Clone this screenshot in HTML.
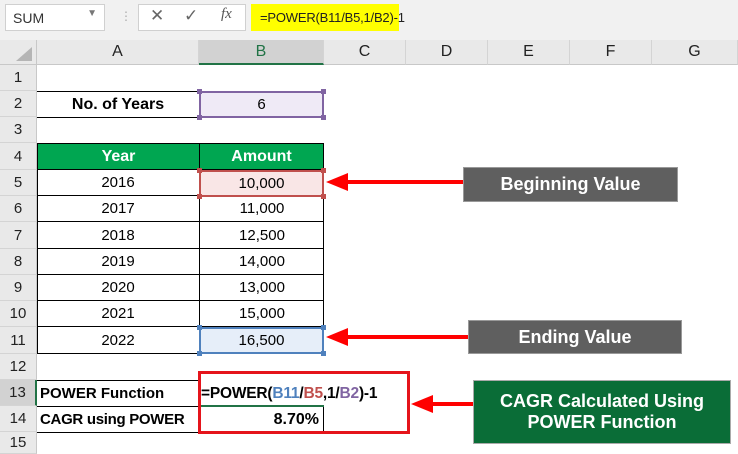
<!DOCTYPE html>
<html><head><style>
*{margin:0;padding:0;box-sizing:border-box}
body{width:738px;height:454px;position:relative;background:#fff;font-family:"Liberation Sans",sans-serif;overflow:hidden}
.a{position:absolute}
.c{position:absolute;display:flex;align-items:center;justify-content:center;font-size:15px;color:#000}
.rh{position:absolute;left:0;width:37px;background:#e9e9e9;border-bottom:1px solid #d4d4d4;border-right:1px solid #c8c8c8;display:flex;align-items:center;justify-content:center;font-size:15px;color:#222}
.ch{position:absolute;top:40px;height:25px;background:#e9e9e9;border-right:1px solid #d4d4d4;border-bottom:1px solid #c8c8c8;display:flex;align-items:center;justify-content:center;font-size:16px;color:#222}
.bx{position:absolute;display:flex;align-items:center;justify-content:center;color:#fff;font-weight:bold;font-size:18px;text-align:center;line-height:21px}
</style></head><body>
<div class="a" style="left:0;top:0;width:738px;height:40px;background:#f1f1f1"></div>
<div class="a" style="left:5px;top:4px;width:100px;height:27px;background:#fff;border:1px solid #d0d0d0;font-size:14px;padding:5px 0 0 7px;color:#333">SUM<span style="position:absolute;right:7px;top:3px;font-size:10px;color:#777">▼</span></div>
<div class="a" style="left:120px;top:9px;color:#aaa;font-size:12px">⋮</div>
<div class="a" style="left:138px;top:4px;width:108px;height:27px;background:#fff;border:1px solid #d0d0d0"></div>
<div class="a" style="left:150px;top:6px;color:#666;font-size:17px">✕</div>
<div class="a" style="left:184px;top:6px;color:#666;font-size:17px">✓</div>
<div class="a" style="left:221px;top:6px;color:#555;font-size:15px;font-family:'Liberation Serif',serif;font-style:italic">fx</div>
<div class="a" style="left:251px;top:4px;width:148px;height:27px;background:#ffff00;font-size:13px;padding:6px 0 0 9px;color:#222;white-space:nowrap;letter-spacing:-0.2px">=POWER(B11/B5,1/B2)-1</div>
<div class="a" style="left:0;top:40px;width:37px;height:25px;background:#e9e9e9;border-right:1px solid #c8c8c8;border-bottom:1px solid #c8c8c8"></div>
<div class="a" style="left:16px;top:47px;width:0;height:0;border-left:16px solid transparent;border-bottom:14px solid #b5b5b5"></div>
<div class="ch" style="left:37px;width:162px">A</div>
<div class="ch" style="left:199px;width:125px;background:#d2d2d2;border-bottom:2px solid #217346;color:#217346">B</div>
<div class="ch" style="left:324px;width:82px">C</div>
<div class="ch" style="left:406px;width:82px">D</div>
<div class="ch" style="left:488px;width:82px">E</div>
<div class="ch" style="left:570px;width:82px">F</div>
<div class="ch" style="left:652px;width:86px">G</div>
<div class="rh" style="top:65px;height:26px">1</div>
<div class="rh" style="top:91px;height:26px">2</div>
<div class="rh" style="top:117px;height:26px">3</div>
<div class="rh" style="top:143px;height:27px">4</div>
<div class="rh" style="top:170px;height:26px">5</div>
<div class="rh" style="top:196px;height:26px">6</div>
<div class="rh" style="top:222px;height:27px">7</div>
<div class="rh" style="top:249px;height:26px">8</div>
<div class="rh" style="top:275px;height:26px">9</div>
<div class="rh" style="top:301px;height:26px">10</div>
<div class="rh" style="top:327px;height:27px">11</div>
<div class="rh" style="top:354px;height:26px">12</div>
<div class="rh" style="top:380px;height:26px;background:#d2d2d2;border-right:2px solid #217346">13</div>
<div class="rh" style="top:406px;height:26px">14</div>
<div class="rh" style="top:432px;height:22px">15</div>
<div class="c" style="left:37px;top:91px;width:162px;height:27px;border-top:1px solid #000;border-bottom:1px solid #000;font-weight:bold;font-size:16px">No. of Years</div>
<div class="c" style="left:199px;top:91px;width:125px;height:27px;background:#efeaf6;border:2px solid #8064a2">6</div>
<div class="c" style="left:37px;top:143px;width:162px;height:27px;background:#00a651;color:#fff;font-weight:bold;font-size:16px;border:1px solid #000;border-right:none">Year</div>
<div class="c" style="left:199px;top:143px;width:125px;height:27px;background:#00a651;color:#fff;font-weight:bold;font-size:16px;border:1px solid #000">Amount</div>
<div class="a" style="left:37px;top:170px;width:287px;height:184px;border-left:1px solid #000;border-right:1px solid #000"></div>
<div class="a" style="left:199px;top:170px;width:1px;height:184px;background:#000"></div>
<div class="c" style="left:37px;top:170px;width:162px;height:26px;border-bottom:1px solid #000">2016</div>
<div class="c" style="left:37px;top:196px;width:162px;height:26px;border-bottom:1px solid #000">2017</div>
<div class="c" style="left:37px;top:222px;width:162px;height:27px;border-bottom:1px solid #000">2018</div>
<div class="c" style="left:37px;top:249px;width:162px;height:26px;border-bottom:1px solid #000">2019</div>
<div class="c" style="left:37px;top:275px;width:162px;height:26px;border-bottom:1px solid #000">2020</div>
<div class="c" style="left:37px;top:301px;width:162px;height:26px;border-bottom:1px solid #000">2021</div>
<div class="c" style="left:37px;top:327px;width:162px;height:27px;border-bottom:1px solid #000">2022</div>
<div class="c" style="left:199px;top:170px;width:125px;height:27px;background:#f9e6e6;border:2px solid #c0504d">10,000</div>
<div class="c" style="left:200px;top:196px;width:124px;height:26px;border-bottom:1px solid #000">11,000</div>
<div class="c" style="left:200px;top:222px;width:124px;height:27px;border-bottom:1px solid #000">12,500</div>
<div class="c" style="left:200px;top:249px;width:124px;height:26px;border-bottom:1px solid #000">14,000</div>
<div class="c" style="left:200px;top:275px;width:124px;height:26px;border-bottom:1px solid #000">13,000</div>
<div class="c" style="left:200px;top:301px;width:124px;height:26px;border-bottom:1px solid #000">15,000</div>
<div class="c" style="left:199px;top:327px;width:125px;height:27px;background:#e6eef9;border:2px solid #4f81bd">16,500</div>
<div class="a" style="left:197px;top:89px;width:5px;height:5px;background:#8064a2"></div>
<div class="a" style="left:321px;top:89px;width:5px;height:5px;background:#8064a2"></div>
<div class="a" style="left:197px;top:115px;width:5px;height:5px;background:#8064a2"></div>
<div class="a" style="left:321px;top:115px;width:5px;height:5px;background:#8064a2"></div>
<div class="a" style="left:197px;top:168px;width:5px;height:5px;background:#c0504d"></div>
<div class="a" style="left:321px;top:168px;width:5px;height:5px;background:#c0504d"></div>
<div class="a" style="left:197px;top:194px;width:5px;height:5px;background:#c0504d"></div>
<div class="a" style="left:321px;top:194px;width:5px;height:5px;background:#c0504d"></div>
<div class="a" style="left:197px;top:325px;width:5px;height:5px;background:#4f81bd"></div>
<div class="a" style="left:321px;top:325px;width:5px;height:5px;background:#4f81bd"></div>
<div class="a" style="left:197px;top:351px;width:5px;height:5px;background:#4f81bd"></div>
<div class="a" style="left:321px;top:351px;width:5px;height:5px;background:#4f81bd"></div>
<div class="a" style="left:37px;top:380px;width:163px;height:53px;border:1px solid #000;border-left:none"></div>
<div class="a" style="left:37px;top:406px;width:163px;height:1px;background:#000"></div>
<div class="a" style="left:40px;top:381px;height:25px;display:flex;align-items:center;font-weight:bold;font-size:15px">POWER Function</div>
<div class="a" style="left:40px;top:407px;height:25px;display:flex;align-items:center;font-weight:bold;font-size:15px;letter-spacing:-0.3px">CAGR using POWER</div>
<div class="a" style="left:201px;top:381px;height:25px;display:flex;align-items:center;font-weight:bold;font-size:15.5px;white-space:nowrap;letter-spacing:-0.2px">=POWER(<span style="color:#4f81bd">B11</span>/<span style="color:#c0504d">B5</span>,1/<span style="color:#8064a2">B2</span>)-1</div>
<div class="a" style="left:200px;top:405px;width:124px;height:2px;background:#217346"></div>
<div class="a" style="left:200px;top:407px;width:124px;height:26px;border-right:1px solid #000;border-bottom:1px solid #000;display:flex;align-items:center;justify-content:flex-end;padding-right:4px;font-weight:bold;font-size:16px">8.70%</div>
<div class="a" style="left:198px;top:371px;width:212px;height:63px;border:3px solid #e5141b"></div>
<svg class="a" style="left:0;top:0" width="738" height="454">
<g fill="#f00" stroke="#f00">
<line x1="340" y1="182" x2="464" y2="182" stroke-width="4"/><polygon points="326,182 348,173 348,191" stroke="none"/>
<line x1="340" y1="337" x2="469" y2="337" stroke-width="4"/><polygon points="326,337 348,328 348,346" stroke="none"/>
<line x1="425" y1="404" x2="474" y2="404" stroke-width="4"/><polygon points="411,404 433,395 433,413" stroke="none"/>
</g></svg>
<div class="bx" style="left:463px;top:167px;width:215px;height:35px;background:#5f5f5f;border:1px solid #999">Beginning Value</div>
<div class="bx" style="left:468px;top:320px;width:214px;height:34px;background:#5f5f5f;border:1px solid #999">Ending Value</div>
<div class="bx" style="left:473px;top:380px;width:258px;height:64px;background:#0a6d37;border:1px solid #aaa">CAGR Calculated Using<br>POWER Function</div>
</body></html>
